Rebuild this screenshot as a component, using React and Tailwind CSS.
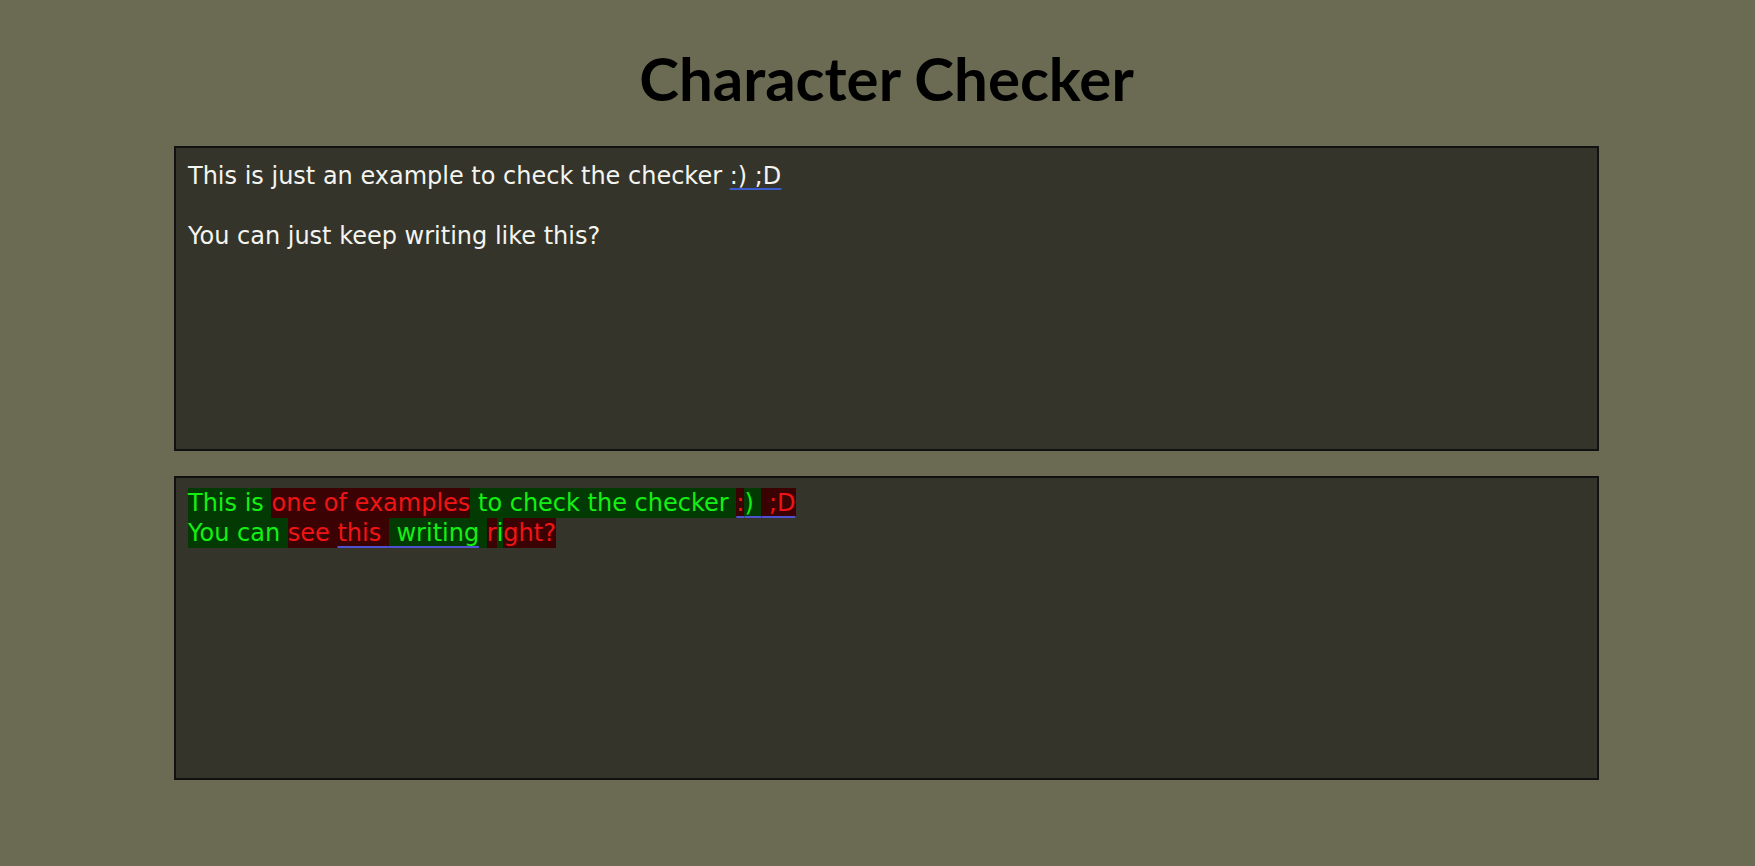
export default function App() {
  const G = "inline-block bg-[#033a03] text-[#14f014]";
  const R = "inline-block bg-[#3a0202] text-[#f01414]";
  const U = " underline decoration-[#4f52d0] decoration-2 underline-offset-[5px]";

  return (
    <div className="min-h-[866px] w-full bg-[#6b6b53] pt-[44px] font-['DejaVu_Sans',sans-serif]">
      <h1 className="pl-[18px] text-center font-['Lato',sans-serif] text-[60px] font-bold leading-[68px] text-black">
        Character Checker
      </h1>

      <div className="ml-[174px] mt-[34px] h-[305px] w-[1425px] border-2 border-[#111] bg-[#35342a] px-[12px] pt-[13px] pb-[10px] text-[24px] leading-[30px] text-[#f4f4f0]">
        <div>
          This is just an example to check the checker{" "}
          <span className="underline decoration-[#3a5bd0] decoration-2 underline-offset-4">:) ;D</span>
        </div>
        <div>&nbsp;</div>
        <div>You can just keep writing like this?</div>
      </div>

      <div className="ml-[174px] mt-[25px] h-[304px] w-[1425px] border-2 border-[#111] bg-[#35342a] px-[12px] py-[10px] text-[24px] leading-[30px] whitespace-pre">
        <div>
          <span className={G}>This is </span>
          <span className={R}>one of examples</span>
          <span className={G}> to check the checker </span>
          <span className={R + U}>:</span>
          <span className={G + U}>) </span>
          <span className={R + U}> ;D</span>
        </div>
        <div>
          <span className={G}>You can </span>
          <span className={R}>see </span>
          <span className={R + U}>this </span>
          <span className={G + U}> writing</span>
          <span className={G}> </span>
          <span className={R}>r</span>
          <span className={G}>i</span>
          <span className={R}>ght?</span>
        </div>
      </div>
    </div>
  );
}
